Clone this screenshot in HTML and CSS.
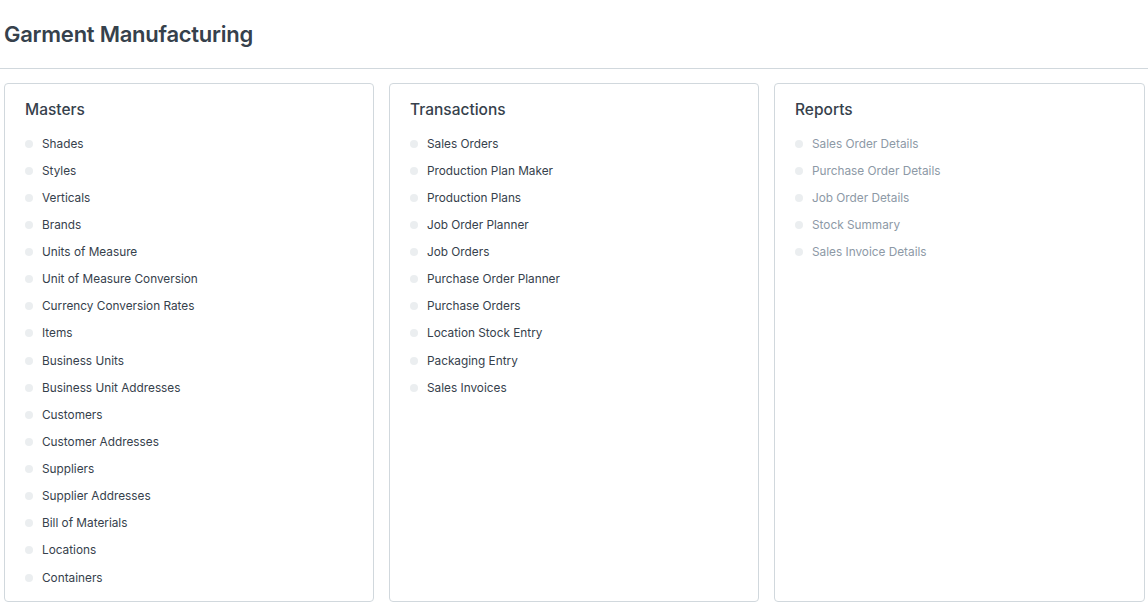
FILE: index.html
```html
<!DOCTYPE html>
<html>
<head>
<meta charset="utf-8">
<link rel="stylesheet" href="styles.css">
</head>
<body>
<header class="page-head">
  <h1 class="page-title">Garment Manufacturing</h1>
</header>
<main class="cards">
  <section class="card">
    <h2 class="card-title">Masters</h2>
    <ul class="links">
      <li>Shades</li>
      <li>Styles</li>
      <li>Verticals</li>
      <li>Brands</li>
      <li>Units of Measure</li>
      <li>Unit of Measure Conversion</li>
      <li>Currency Conversion Rates</li>
      <li>Items</li>
      <li>Business Units</li>
      <li>Business Unit Addresses</li>
      <li>Customers</li>
      <li>Customer Addresses</li>
      <li>Suppliers</li>
      <li>Supplier Addresses</li>
      <li>Bill of Materials</li>
      <li>Locations</li>
      <li>Containers</li>
    </ul>
  </section>
  <section class="card">
    <h2 class="card-title">Transactions</h2>
    <ul class="links">
      <li>Sales Orders</li>
      <li>Production Plan Maker</li>
      <li>Production Plans</li>
      <li>Job Order Planner</li>
      <li>Job Orders</li>
      <li>Purchase Order Planner</li>
      <li>Purchase Orders</li>
      <li>Location Stock Entry</li>
      <li>Packaging Entry</li>
      <li>Sales Invoices</li>
    </ul>
  </section>
  <section class="card">
    <h2 class="card-title">Reports</h2>
    <ul class="links muted">
      <li>Sales Order Details</li>
      <li>Purchase Order Details</li>
      <li>Job Order Details</li>
      <li>Stock Summary</li>
      <li>Sales Invoice Details</li>
    </ul>
  </section>
</main>
</body>
</html>
```
FILE: styles.css
```css
html, body {
  margin: 0;
  padding: 0;
  background: #fff;
  font-family: Inter, "Noto Sans", sans-serif;
  color: #36414c;
}
.page-head {
  border-bottom: 1px solid #d1d8dd;
  padding: 18px 4px 0;
  height: 50px;
}
.page-title {
  margin: 0;
  font-size: 22px;
  font-weight: 600;
  line-height: 32px;
  letter-spacing: -0.25px;
}
.cards {
  display: grid;
  grid-template-columns: 370px 370px 1fr;
  gap: 15px;
  padding: 14px 3px 0 4px;
}
.card {
  border: 1px solid #d1d8dd;
  border-radius: 4px;
  padding: 15px 20px 10px;
}
.card-title {
  margin: 0 0 9px;
  font-size: 15.5px;
  font-weight: 500;
  line-height: 22px;
}
.links {
  list-style: none;
  margin: 0;
  padding: 0;
}
.links li {
  display: flex;
  align-items: center;
  gap: 9px;
  height: 27.13px;
  font-size: 11.8px;
  color: #36414c;
}
.links li::before {
  content: "";
  width: 8px;
  height: 8px;
  border-radius: 50%;
  background: #ebeef0;
  flex: none;
}
.links.muted li {
  color: #8d99a6;
}
```
